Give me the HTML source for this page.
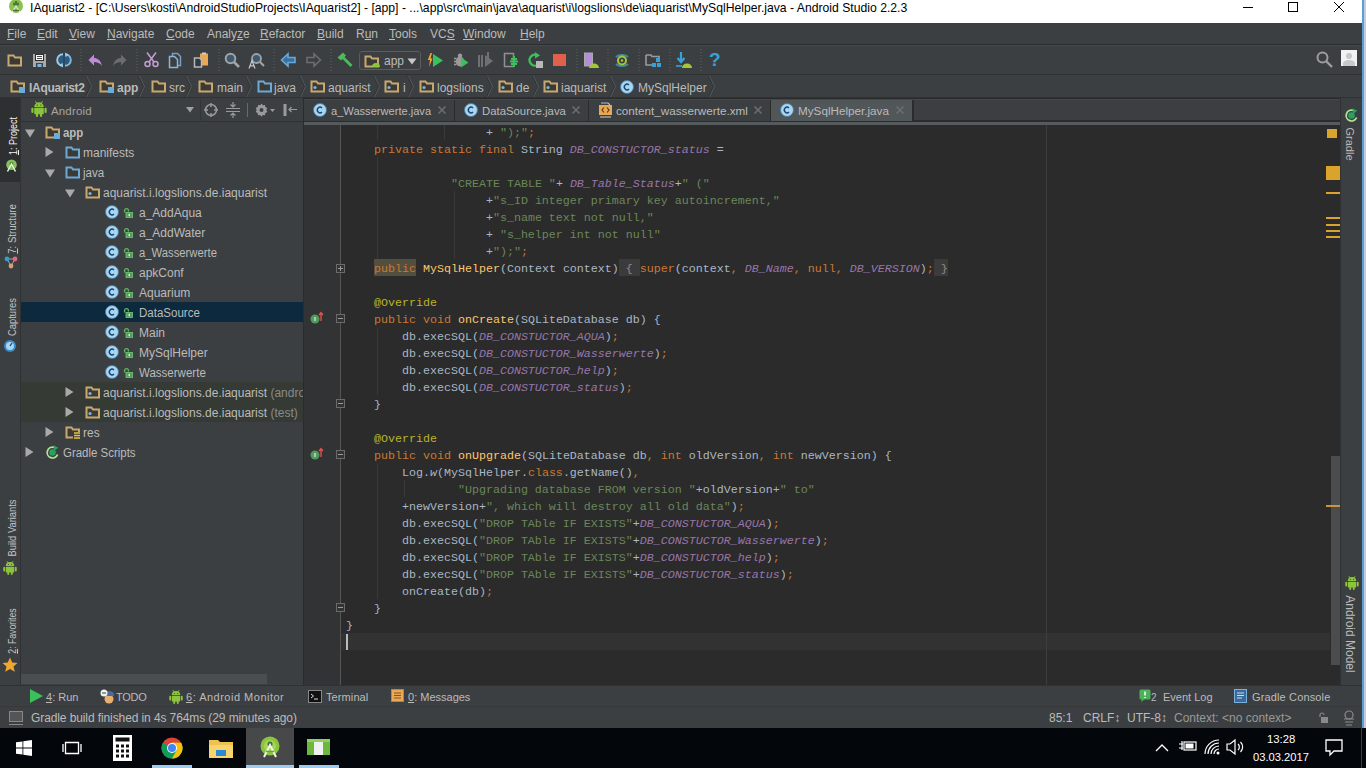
<!DOCTYPE html>
<html><head><meta charset="utf-8"><style>
*{box-sizing:border-box}
html,body{margin:0;padding:0}
body{width:1366px;height:768px;overflow:hidden;position:relative;background:#3c3f41;font-family:"Liberation Sans",sans-serif;color:#bbbbbb;font-size:12px}
.a{position:absolute}
svg.a{overflow:visible}
.t{position:absolute;white-space:pre;line-height:14px}
u{text-decoration:underline;text-underline-offset:1px;text-decoration-thickness:1px}
.ln{position:absolute;height:17px;line-height:17px;white-space:pre;font-family:"Liberation Mono",monospace;font-size:11.6667px;color:#a9b7c6}
.ck{color:#cc7832}
.cs{color:#6a8759}
.cf{color:#9876aa;font-style:italic}
.ca{color:#bbb529}
.cm{color:#ffc66d}
.ci{font-style:italic}
.chl{color:#cc7832}
.cfb{color:#8c8c8c}
</style></head><body>
<div class="a" style="left:0px;top:0px;width:1366px;height:23px;background:#ffffff;"></div>
<div class="a" style="left:0;top:0;width:30px;height:23px;overflow:hidden"><svg class="a" style="left:8px;top:-2px" width="16" height="16" viewBox="0 0 16 16"><circle cx="8" cy="8" r="7" fill="#8cc152"/><path d="M8 3v7M5 6h6" stroke="#4e7a34" stroke-width="2.4"/><path d="M4.5 14l3.5-6 3.5 6" stroke="#e8f0e0" stroke-width="1.2" fill="none"/><path d="M5 12.5h6" stroke="#4e6a44" stroke-width="1.4"/></svg></div>
<div class="t" style="left:30px;top:1px;color:#000;font-size:12.2px;">IAquarist2 - [C:\Users\kosti\AndroidStudioProjects\IAquarist2] - [app] - ...\app\src\main\java\aquarist\i\logslions\de\iaquarist\MySqlHelper.java - Android Studio 2.2.3</div>
<div class="a" style="left:1243px;top:7px;width:10px;height:1px;background:#000;"></div>
<div class="a" style="left:1288px;top:2px;width:10px;height:10px;background:transparent;border:1px solid #000"></div>
<svg class="a" style="left:1334px;top:2px" width="10" height="10" viewBox="0 0 10 10"><path d="M0 0l10 10M10 0l-10 10" stroke="#000" stroke-width="1"/></svg>
<div class="t" style="left:7px;top:27px;color:#bbbbbb;font-size:12px;"><u>F</u>ile</div>
<div class="t" style="left:37px;top:27px;color:#bbbbbb;font-size:12px;"><u>E</u>dit</div>
<div class="t" style="left:69px;top:27px;color:#bbbbbb;font-size:12px;"><u>V</u>iew</div>
<div class="t" style="left:107px;top:27px;color:#bbbbbb;font-size:12px;"><u>N</u>avigate</div>
<div class="t" style="left:166px;top:27px;color:#bbbbbb;font-size:12px;"><u>C</u>ode</div>
<div class="t" style="left:207px;top:27px;color:#bbbbbb;font-size:12px;">Analy<u>z</u>e</div>
<div class="t" style="left:260px;top:27px;color:#bbbbbb;font-size:12px;"><u>R</u>efactor</div>
<div class="t" style="left:317px;top:27px;color:#bbbbbb;font-size:12px;"><u>B</u>uild</div>
<div class="t" style="left:356px;top:27px;color:#bbbbbb;font-size:12px;">R<u>u</u>n</div>
<div class="t" style="left:389px;top:27px;color:#bbbbbb;font-size:12px;"><u>T</u>ools</div>
<div class="t" style="left:430px;top:27px;color:#bbbbbb;font-size:12px;">VC<u>S</u></div>
<div class="t" style="left:463px;top:27px;color:#bbbbbb;font-size:12px;"><u>W</u>indow</div>
<div class="t" style="left:520px;top:27px;color:#bbbbbb;font-size:12px;"><u>H</u>elp</div>
<div class="a" style="left:0px;top:44px;width:1362px;height:1px;background:#2a2c2e;"></div>
<div class="a" style="left:0px;top:45px;width:1362px;height:1px;background:#46494b;"></div>
<svg class="a" style="left:7px;top:54px" width="16" height="14" viewBox="0 0 16 14"><path d="M1.5 1.5h5l1.5 2h6v8h-12.5z" fill="#3b3a35" stroke="#c9a870" stroke-width="2"/></svg>
<svg class="a" style="left:33px;top:54px" width="13" height="13" viewBox="0 0 13 13"><rect x="0" y="0" width="13" height="13" fill="#a9a9a9"/><rect x="2.5" y="0.5" width="8" height="6" fill="#fafafa" stroke="#2e2e2e" stroke-width="1"/><path d="M4 2.5h5M4 4.5h5" stroke="#3a3a3a" stroke-width="0.9"/><rect x="3" y="9" width="7" height="4" fill="#2e4a63"/><rect x="4.5" y="10" width="4" height="3" fill="#8cb0d0"/></svg>
<svg class="a" style="left:56px;top:52px" width="16" height="16" viewBox="0 0 16 16"><circle cx="8" cy="8" r="5.5" fill="#2c5a80"/><path d="M7 2.2A5.8 5.8 0 0 0 7 13.8" stroke="#9ccce6" stroke-width="2" fill="none"/><path d="M9 2.2A5.8 5.8 0 0 1 9 13.8" stroke="#7fb8dc" stroke-width="2" fill="none"/><path d="M9 0.5l4 2.5-3.5 2z" fill="#9ccce6"/><path d="M7 15.5l-4-2.5 3.5-2z" fill="#9ccce6"/><path d="M8 2v12" stroke="#1e3a55" stroke-width="1"/></svg>
<svg class="a" style="left:80px;top:49px" width="2" height="22" viewBox="0 0 2 22"><path d="M1 0v22" stroke="#5e6163" stroke-width="1" stroke-dasharray="1 2"/></svg>
<svg class="a" style="left:88px;top:53px" width="15" height="15" viewBox="0 0 15 15"><path d="M14 13C13 7 9 5 6 5V1.5L0.5 7 6 12.5V9c3 0 6 1 8 4z" fill="#c08ad8"/></svg>
<svg class="a" style="left:112px;top:53px" width="15" height="15" viewBox="0 0 15 15"><path d="M1 13C2 7 6 5 9 5V1.5L14.5 7 9 12.5V9c-3 0-6 1-8 4z" fill="#6a6c6e"/></svg>
<svg class="a" style="left:136px;top:49px" width="2" height="22" viewBox="0 0 2 22"><path d="M1 0v22" stroke="#5e6163" stroke-width="1" stroke-dasharray="1 2"/></svg>
<svg class="a" style="left:144px;top:52px" width="15" height="16" viewBox="0 0 15 16"><g fill="none" stroke="#c59dd6" stroke-width="1.5"><circle cx="3.5" cy="12" r="2.5"/><circle cx="11.5" cy="12" r="2.5"/><path d="M5 10L12 0.5M10 10L3 0.5"/></g></svg>
<svg class="a" style="left:168px;top:52px" width="16" height="16" viewBox="0 0 16 16"><path d="M4.5 1.5h5l3 3v9h-8z" fill="none" stroke="#7a9fc0" stroke-width="1.5"/><path d="M1.5 4.5h5l3 3v8h-8z" fill="#3c3f41" stroke="#8cb4d8" stroke-width="1.5"/></svg>
<svg class="a" style="left:193px;top:52px" width="16" height="16" viewBox="0 0 16 16"><rect x="7" y="1.5" width="8" height="12" fill="#e8a855"/><path d="M9 0.5h4v2h-4z" fill="#d0d0d0"/><path d="M1.5 6h5l2 2v7h-7z" fill="#2e3a44" stroke="#b8b8b8" stroke-width="1.5"/></svg>
<svg class="a" style="left:218px;top:49px" width="2" height="22" viewBox="0 0 2 22"><path d="M1 0v22" stroke="#5e6163" stroke-width="1" stroke-dasharray="1 2"/></svg>
<svg class="a" style="left:224px;top:52px" width="16" height="16" viewBox="0 0 16 16"><circle cx="6.5" cy="6.5" r="4.8" fill="#3d5a73" stroke="#a0a4a8" stroke-width="2"/><path d="M10 10l5 5" stroke="#a0a4a8" stroke-width="2.6"/></svg>
<svg class="a" style="left:248px;top:52px" width="17" height="17" viewBox="0 0 17 17"><circle cx="8.5" cy="6.5" r="4.5" fill="#3d5a73" stroke="#a0a4a8" stroke-width="1.8"/><path d="M12 10l4 4" stroke="#a0a4a8" stroke-width="2.2"/><path d="M1 16.5l3-8 3 8M2 13.8h4" stroke="#c8c8c8" stroke-width="1.2" fill="none"/></svg>
<svg class="a" style="left:273px;top:49px" width="2" height="22" viewBox="0 0 2 22"><path d="M1 0v22" stroke="#5e6163" stroke-width="1" stroke-dasharray="1 2"/></svg>
<svg class="a" style="left:281px;top:53px" width="15" height="14" viewBox="0 0 15 14"><path d="M0.5 7L7 0.8V4.5h7v5H7v3.7z" fill="#3b6f9e" stroke="#66a8dc" stroke-width="1.6"/></svg>
<svg class="a" style="left:306px;top:53px" width="15" height="14" viewBox="0 0 15 14"><path d="M14.5 7L8 0.8V4.5H1v5h7v3.7z" fill="#3c3f41" stroke="#6b6d6f" stroke-width="1.6"/></svg>
<svg class="a" style="left:330px;top:49px" width="2" height="22" viewBox="0 0 2 22"><path d="M1 0v22" stroke="#5e6163" stroke-width="1" stroke-dasharray="1 2"/></svg>
<svg class="a" style="left:337px;top:52px" width="16" height="16" viewBox="0 0 16 16"><path d="M0.5 5.5L6 0.5l3 3-1.5 1.5 8 8-2 2-8-8-1.5 1.5z" fill="#4cbb5c"/></svg>
<div class="a" style="left:359px;top:51px;width:62px;height:19px;background:#3c3f41;border:1px solid #5a5d5f;border-radius:3px"></div>
<svg class="a" style="left:364px;top:55px" width="16" height="14" viewBox="0 0 16 14"><path d="M1.5 1.5h5l1.5 2h6v8h-12.5z" fill="#3b3a35" stroke="#c9a870" stroke-width="2"/></svg>
<svg class="a" style="left:371px;top:60px" width="10" height="8" viewBox="0 0 10 8"><path d="M1 7a4 4 0 0 1 8 0z" fill="#8cc43c"/></svg>
<div class="t" style="left:384px;top:54px;color:#bbbbbb;font-size:12px;">app</div>
<svg class="a" style="left:407px;top:58px" width="9" height="7" viewBox="0 0 9 7"><path d="M0.5 0.5h9l-4.5 6z" fill="#c8c8c8"/></svg>
<svg class="a" style="left:427px;top:52px" width="17" height="17" viewBox="0 0 17 17"><path d="M3.5 1L0.8 8h2.2l-1 7L5.5 6.5H3.5l1.5-5.5z" fill="#f0a732"/><path d="M6 2v13l10-6.5z" fill="#3bc15a"/></svg>
<svg class="a" style="left:453px;top:52px" width="16" height="17" viewBox="0 0 16 17"><ellipse cx="7" cy="9.5" rx="4.2" ry="5" fill="#9a9a9a"/><circle cx="7" cy="3.8" r="2.2" fill="#9a9a9a"/><path d="M1 6.5h2.5M1 9.5h2.5M1 12.5h2.5" stroke="#9a9a9a" stroke-width="1.3"/><path d="M8 5.5v10l7.5-5z" fill="#3bc15a"/></svg>
<svg class="a" style="left:478px;top:52px" width="16" height="17" viewBox="0 0 16 17"><path d="M1 3v12M4 3v12" stroke="#6e7072" stroke-width="2"/><path d="M7 3v12l8-6z" fill="#6e7072"/><path d="M10 0v6" stroke="#6e7072" stroke-width="2"/></svg>
<svg class="a" style="left:503px;top:52px" width="16" height="17" viewBox="0 0 16 17"><rect x="1.5" y="1.5" width="9" height="13" fill="none" stroke="#8e9092" stroke-width="1.5"/><path d="M11 4v11M7 9.5h8M8 7h6M8 12h6" stroke="#3bc15a" stroke-width="2"/></svg>
<svg class="a" style="left:528px;top:52px" width="16" height="17" viewBox="0 0 16 17"><path d="M10 3.5A5.5 5.5 0 1 0 11 12" fill="none" stroke="#3bc15a" stroke-width="2.4"/><path d="M7 0l5 3.5-5 3z" fill="#3bc15a"/><rect x="8" y="9" width="7" height="7" fill="#b8b8b8"/></svg>
<div class="a" style="left:553px;top:54px;width:13px;height:12px;background:#e0604e;"></div>
<svg class="a" style="left:576px;top:49px" width="2" height="22" viewBox="0 0 2 22"><path d="M1 0v22" stroke="#5e6163" stroke-width="1" stroke-dasharray="1 2"/></svg>
<svg class="a" style="left:583px;top:52px" width="16" height="17" viewBox="0 0 16 17"><rect x="1.5" y="1" width="8" height="13" fill="#b48ed8" stroke="#aaaaaa" stroke-width="1"/><path d="M6 16a5 4.5 0 0 1 10 0z" fill="#a4c639"/></svg>
<svg class="a" style="left:607px;top:49px" width="2" height="22" viewBox="0 0 2 22"><path d="M1 0v22" stroke="#5e6163" stroke-width="1" stroke-dasharray="1 2"/></svg>
<svg class="a" style="left:614px;top:52px" width="16" height="17" viewBox="0 0 16 17"><path d="M2 5a7 4 0 0 1 12 0" fill="none" stroke="#3b8aa8" stroke-width="2"/><path d="M2 12a7 4 0 0 0 12 0" fill="none" stroke="#3b8aa8" stroke-width="2"/><circle cx="8" cy="8.5" r="4" fill="none" stroke="#a4c639" stroke-width="2"/><circle cx="8" cy="8.5" r="1.3" fill="#a4c639"/></svg>
<svg class="a" style="left:638px;top:49px" width="2" height="22" viewBox="0 0 2 22"><path d="M1 0v22" stroke="#5e6163" stroke-width="1" stroke-dasharray="1 2"/></svg>
<svg class="a" style="left:645px;top:52px" width="17" height="17" viewBox="0 0 17 17"><path d="M1 3h5l1 1.5h7v3" fill="none" stroke="#9a9a9a" stroke-width="1.6"/><path d="M1 3v10h6" fill="none" stroke="#9a9a9a" stroke-width="1.6"/><rect x="11" y="6" width="4" height="4" fill="#3aa0d8"/><rect x="7" y="11" width="4" height="4" fill="#3aa0d8"/><rect x="12" y="11" width="4" height="4" fill="#3aa0d8"/></svg>
<svg class="a" style="left:669px;top:49px" width="2" height="22" viewBox="0 0 2 22"><path d="M1 0v22" stroke="#5e6163" stroke-width="1" stroke-dasharray="1 2"/></svg>
<svg class="a" style="left:675px;top:52px" width="17" height="17" viewBox="0 0 17 17"><path d="M6 0v9M2.5 6l3.5 4 3.5-4" stroke="#3aa0d8" stroke-width="2.2" fill="none"/><path d="M1 14h6" stroke="#3aa0d8" stroke-width="1.6"/><path d="M7 16a5 4.5 0 0 1 10 0z" fill="#a4c639"/></svg>
<svg class="a" style="left:700px;top:49px" width="2" height="22" viewBox="0 0 2 22"><path d="M1 0v22" stroke="#5e6163" stroke-width="1" stroke-dasharray="1 2"/></svg>
<div class="t" style="left:709px;top:50px;color:#3aa0d8;font-size:19px;font-weight:bold;line-height:20px">?</div>
<svg class="a" style="left:1316px;top:51px" width="17" height="17" viewBox="0 0 17 17"><circle cx="6.5" cy="6.5" r="5" fill="none" stroke="#9d9d9d" stroke-width="2"/><path d="M10 10l6 6" stroke="#9d9d9d" stroke-width="2.4"/></svg>
<svg class="a" style="left:1341px;top:50px" width="16" height="16" viewBox="0 0 16 16"><rect width="16" height="16" fill="#f2f2f2"/><circle cx="8" cy="6" r="3" fill="#c8c8c8"/><path d="M2 16v-3a6 3 0 0 1 12 0v3z" fill="#c8c8c8"/></svg>
<div class="a" style="left:0px;top:74px;width:1363px;height:1px;background:#2f3133;"></div>
<svg class="a" style="left:10px;top:80px" width="16" height="14" viewBox="0 0 16 14"><path d="M1.5 1.5h5l1.5 2h6v8h-12.5z" fill="#3b3a35" stroke="#c9a870" stroke-width="2"/><rect x="9" y="7" width="6" height="6" fill="#6cacd8"/></svg>
<div class="t" style="left:29px;top:81px;color:#bbbbbb;font-size:12px;font-weight:bold;letter-spacing:-0.3px">IAquarist2</div>
<svg class="a" style="left:85px;top:76px" width="7" height="21" viewBox="0 0 7 21"><path d="M0.5 0l5 10.5-5 10.5" fill="none" stroke="#2f3133" stroke-width="1"/><path d="M1.5 0l5 10.5-5 10.5" fill="none" stroke="#55585a" stroke-width="1"/></svg>
<svg class="a" style="left:99px;top:80px" width="16" height="14" viewBox="0 0 16 14"><path d="M1.5 1.5h5l1.5 2h6v8h-12.5z" fill="#3b3a35" stroke="#c9a870" stroke-width="2"/><rect x="9" y="7" width="6" height="6" fill="#6cacd8"/></svg>
<div class="t" style="left:117px;top:81px;color:#bbbbbb;font-size:12px;font-weight:bold">app</div>
<svg class="a" style="left:138px;top:76px" width="7" height="21" viewBox="0 0 7 21"><path d="M0.5 0l5 10.5-5 10.5" fill="none" stroke="#2f3133" stroke-width="1"/><path d="M1.5 0l5 10.5-5 10.5" fill="none" stroke="#55585a" stroke-width="1"/></svg>
<svg class="a" style="left:151px;top:80px" width="16" height="14" viewBox="0 0 16 14"><path d="M1.5 1.5h5l1.5 2h6v8h-12.5z" fill="#3b3a35" stroke="#c9a870" stroke-width="2"/></svg>
<div class="t" style="left:169px;top:81px;color:#bbbbbb;font-size:12px;">src</div>
<svg class="a" style="left:185px;top:76px" width="7" height="21" viewBox="0 0 7 21"><path d="M0.5 0l5 10.5-5 10.5" fill="none" stroke="#2f3133" stroke-width="1"/><path d="M1.5 0l5 10.5-5 10.5" fill="none" stroke="#55585a" stroke-width="1"/></svg>
<svg class="a" style="left:198px;top:80px" width="16" height="14" viewBox="0 0 16 14"><path d="M1.5 1.5h5l1.5 2h6v8h-12.5z" fill="#3b3a35" stroke="#c9a870" stroke-width="2"/></svg>
<div class="t" style="left:217px;top:81px;color:#bbbbbb;font-size:12px;">main</div>
<svg class="a" style="left:245px;top:76px" width="7" height="21" viewBox="0 0 7 21"><path d="M0.5 0l5 10.5-5 10.5" fill="none" stroke="#2f3133" stroke-width="1"/><path d="M1.5 0l5 10.5-5 10.5" fill="none" stroke="#55585a" stroke-width="1"/></svg>
<svg class="a" style="left:257px;top:80px" width="16" height="14" viewBox="0 0 16 14"><path d="M1.5 1.5h5l1.5 2h6v8h-12.5z" fill="#3b3a35" stroke="#6ca8d8" stroke-width="2"/></svg>
<div class="t" style="left:274px;top:81px;color:#bbbbbb;font-size:12px;">java</div>
<svg class="a" style="left:299px;top:76px" width="7" height="21" viewBox="0 0 7 21"><path d="M0.5 0l5 10.5-5 10.5" fill="none" stroke="#2f3133" stroke-width="1"/><path d="M1.5 0l5 10.5-5 10.5" fill="none" stroke="#55585a" stroke-width="1"/></svg>
<svg class="a" style="left:310px;top:80px" width="16" height="14" viewBox="0 0 16 14"><path d="M1.5 1.5h5l1.5 2h6v8h-12.5z" fill="#3b3a35" stroke="#c9a870" stroke-width="2"/><circle cx="5" cy="7.5" r="1.6" fill="#7fb4dc"/></svg>
<div class="t" style="left:328px;top:81px;color:#bbbbbb;font-size:12px;">aquarist</div>
<svg class="a" style="left:373px;top:76px" width="7" height="21" viewBox="0 0 7 21"><path d="M0.5 0l5 10.5-5 10.5" fill="none" stroke="#2f3133" stroke-width="1"/><path d="M1.5 0l5 10.5-5 10.5" fill="none" stroke="#55585a" stroke-width="1"/></svg>
<svg class="a" style="left:384px;top:80px" width="16" height="14" viewBox="0 0 16 14"><path d="M1.5 1.5h5l1.5 2h6v8h-12.5z" fill="#3b3a35" stroke="#c9a870" stroke-width="2"/><circle cx="5" cy="7.5" r="1.6" fill="#7fb4dc"/></svg>
<div class="t" style="left:403px;top:81px;color:#bbbbbb;font-size:12px;">i</div>
<svg class="a" style="left:407px;top:76px" width="7" height="21" viewBox="0 0 7 21"><path d="M0.5 0l5 10.5-5 10.5" fill="none" stroke="#2f3133" stroke-width="1"/><path d="M1.5 0l5 10.5-5 10.5" fill="none" stroke="#55585a" stroke-width="1"/></svg>
<svg class="a" style="left:419px;top:80px" width="16" height="14" viewBox="0 0 16 14"><path d="M1.5 1.5h5l1.5 2h6v8h-12.5z" fill="#3b3a35" stroke="#c9a870" stroke-width="2"/><circle cx="5" cy="7.5" r="1.6" fill="#7fb4dc"/></svg>
<div class="t" style="left:437px;top:81px;color:#bbbbbb;font-size:12px;">logslions</div>
<svg class="a" style="left:486px;top:76px" width="7" height="21" viewBox="0 0 7 21"><path d="M0.5 0l5 10.5-5 10.5" fill="none" stroke="#2f3133" stroke-width="1"/><path d="M1.5 0l5 10.5-5 10.5" fill="none" stroke="#55585a" stroke-width="1"/></svg>
<svg class="a" style="left:498px;top:80px" width="16" height="14" viewBox="0 0 16 14"><path d="M1.5 1.5h5l1.5 2h6v8h-12.5z" fill="#3b3a35" stroke="#c9a870" stroke-width="2"/><circle cx="5" cy="7.5" r="1.6" fill="#7fb4dc"/></svg>
<div class="t" style="left:516px;top:81px;color:#bbbbbb;font-size:12px;">de</div>
<svg class="a" style="left:532px;top:76px" width="7" height="21" viewBox="0 0 7 21"><path d="M0.5 0l5 10.5-5 10.5" fill="none" stroke="#2f3133" stroke-width="1"/><path d="M1.5 0l5 10.5-5 10.5" fill="none" stroke="#55585a" stroke-width="1"/></svg>
<svg class="a" style="left:543px;top:80px" width="16" height="14" viewBox="0 0 16 14"><path d="M1.5 1.5h5l1.5 2h6v8h-12.5z" fill="#3b3a35" stroke="#c9a870" stroke-width="2"/><circle cx="5" cy="7.5" r="1.6" fill="#7fb4dc"/></svg>
<div class="t" style="left:561px;top:81px;color:#bbbbbb;font-size:12px;">iaquarist</div>
<svg class="a" style="left:609px;top:76px" width="7" height="21" viewBox="0 0 7 21"><path d="M0.5 0l5 10.5-5 10.5" fill="none" stroke="#2f3133" stroke-width="1"/><path d="M1.5 0l5 10.5-5 10.5" fill="none" stroke="#55585a" stroke-width="1"/></svg>
<svg class="a" style="left:620px;top:80px" width="14" height="14" viewBox="0 0 14 14"><circle cx="7" cy="7" r="6.5" fill="#a6d6f2" stroke="#4a7aa0" stroke-width="0.9"/><path d="M9 4.9a2.8 2.8 0 1 0 0 4.2" fill="none" stroke="#1e4470" stroke-width="1.4"/></svg>
<div class="t" style="left:638px;top:81px;color:#bbbbbb;font-size:12px;">MySqlHelper</div>
<svg class="a" style="left:708px;top:76px" width="7" height="21" viewBox="0 0 7 21"><path d="M0.5 0l5 10.5-5 10.5" fill="none" stroke="#2f3133" stroke-width="1"/><path d="M1.5 0l5 10.5-5 10.5" fill="none" stroke="#55585a" stroke-width="1"/></svg>
<div class="a" style="left:0px;top:97px;width:1363px;height:1px;background:#2f3133;"></div>
<div class="a" style="left:0px;top:98px;width:20px;height:84px;background:#2d2f30;"></div>
<div class="t" style="left:-87.0px;top:128.5px;width:200px;text-align:center;transform:rotate(-90deg) scaleX(0.82);color:#f2f2f2;font-size:11px"><u>1</u>: Project</div>
<svg class="a" style="left:5px;top:159px" width="13" height="13" viewBox="0 0 13 13"><circle cx="6.5" cy="5.8" r="5.3" fill="#86bf5e"/><circle cx="6.5" cy="4.8" r="2" fill="#4f8a3a"/><path d="M2.5 12.5L6.5 5l4 7.5" stroke="#e6f5d8" stroke-width="1.5" fill="none"/></svg>
<div class="t" style="left:-88.0px;top:222.0px;width:200px;text-align:center;transform:rotate(-90deg) scaleX(0.87);color:#c4c4c4;font-size:11px"><u>7</u>: Structure</div>
<svg class="a" style="left:4px;top:255px" width="14" height="14" viewBox="0 0 14 14"><path d="M3 4L7 11l4-7z" fill="none" stroke="#a0a0a0" stroke-width="1"/><circle cx="3" cy="4" r="2.4" fill="#3a9cc4"/><circle cx="11" cy="4" r="2.4" fill="#e0687e"/><circle cx="7" cy="11" r="2.4" fill="#d4a078"/></svg>
<div class="t" style="left:-88.0px;top:310.0px;width:200px;text-align:center;transform:rotate(-90deg) scaleX(0.85);color:#c4c4c4;font-size:11px">Captures</div>
<svg class="a" style="left:3px;top:339px" width="14" height="14" viewBox="0 0 14 14"><circle cx="7" cy="7" r="6" fill="#3a8ac8"/><circle cx="7" cy="7" r="4" fill="#a8d4f0"/><path d="M7 7l2-3" stroke="#1e3a5a" stroke-width="1.2"/></svg>
<div class="t" style="left:-88.0px;top:521.0px;width:200px;text-align:center;transform:rotate(-90deg) scaleX(0.85);color:#c4c4c4;font-size:11px">Build Variants</div>
<svg class="a" style="left:3px;top:560px;width:14px;height:15px" width="15" height="16" viewBox="0 0 15 16"><g fill="#8cc43c"><path d="M3 6.5a4.5 4.3 0 0 1 9 0z"/><rect x="3" y="7.3" width="9" height="6" rx="0.8"/><rect x="0.3" y="7.3" width="2" height="5" rx="1"/><rect x="12.7" y="7.3" width="2" height="5" rx="1"/><rect x="4.6" y="12" width="2" height="4" rx="1"/><rect x="8.4" y="12" width="2" height="4" rx="1"/><path d="M4.2 1.2l1.4 2.2M10.8 1.2l-1.4 2.2" stroke="#8cc43c" stroke-width="0.9"/></g><circle cx="5.8" cy="4.8" r="0.6" fill="#3c3f41"/><circle cx="9.2" cy="4.8" r="0.6" fill="#3c3f41"/></svg>
<div class="t" style="left:-88.0px;top:623.5px;width:200px;text-align:center;transform:rotate(-90deg) scaleX(0.79);color:#c4c4c4;font-size:11px"><u>2</u>: Favorites</div>
<svg class="a" style="left:2px;top:657px" width="16" height="16" viewBox="0 0 16 16"><path d="M8 0.5l2.2 5 5.3 0.4-4 3.6 1.3 5.3L8 12 3.2 14.8l1.3-5.3-4-3.6 5.3-.4z" fill="#f0a732"/></svg>
<div class="a" style="left:20px;top:98px;width:1px;height:587px;background:#2f3133;"></div>
<svg class="a" style="left:31px;top:100px;width:16px;height:17px" width="15" height="16" viewBox="0 0 15 16"><g fill="#8cc43c"><path d="M3 6.5a4.5 4.3 0 0 1 9 0z"/><rect x="3" y="7.3" width="9" height="6" rx="0.8"/><rect x="0.3" y="7.3" width="2" height="5" rx="1"/><rect x="12.7" y="7.3" width="2" height="5" rx="1"/><rect x="4.6" y="12" width="2" height="4" rx="1"/><rect x="8.4" y="12" width="2" height="4" rx="1"/><path d="M4.2 1.2l1.4 2.2M10.8 1.2l-1.4 2.2" stroke="#8cc43c" stroke-width="0.9"/></g><circle cx="5.8" cy="4.8" r="0.6" fill="#3c3f41"/><circle cx="9.2" cy="4.8" r="0.6" fill="#3c3f41"/></svg>
<div class="t" style="left:51px;top:104px;color:#a4a4a4;font-size:11.5px;letter-spacing:0.15px">Android</div>
<svg class="a" style="left:186px;top:107px" width="8" height="6" viewBox="0 0 8 6"><path d="M0 0h8l-4 5.5z" fill="#a0a0a0"/></svg>
<div class="a" style="left:200px;top:99px;width:1px;height:22px;background:#323436;"></div>
<svg class="a" style="left:204px;top:103px" width="14" height="14" viewBox="0 0 14 14"><circle cx="7" cy="7" r="5.5" fill="none" stroke="#9a9a9a" stroke-width="1.5"/><path d="M7 0v4M7 10v4M0 7h4M10 7h4" stroke="#9a9a9a" stroke-width="1.5"/></svg>
<svg class="a" style="left:226px;top:102px" width="14" height="16" viewBox="0 0 14 16"><path d="M0 6.5h14M0 9.5h14" stroke="#9a9a9a" stroke-width="1"/><path d="M7 0v5M4.5 2.5L7 5l2.5-2.5M7 16v-5M4.5 13.5L7 11l2.5 2.5" stroke="#9a9a9a" stroke-width="1.2" fill="none"/></svg>
<div class="a" style="left:247px;top:103px;width:1px;height:14px;background:#6a6a6a;"></div>
<svg class="a" style="left:255px;top:103px" width="20" height="14" viewBox="0 0 20 14"><path d="M6.5 0.5l1.3 1.8 2.2-.4.3 2.2 2 1-1 2 1 2-2 1-.3 2.2-2.2-.4-1.3 1.8-1.3-1.8-2.2.4-.3-2.2-2-1 1-2-1-2 2-1 .3-2.2 2.2.4z" fill="#9a9a9a"/><circle cx="6.5" cy="7" r="2" fill="#3c3f41"/><path d="M15 6h5l-2.5 3z" fill="#9a9a9a"/></svg>
<svg class="a" style="left:283px;top:103px" width="14" height="14" viewBox="0 0 14 14"><rect x="0.5" y="1" width="3" height="12" fill="#9a9a9a"/><path d="M6 6.5h8M8.5 4L6 6.5 8.5 9" stroke="#9a9a9a" stroke-width="1.2" fill="none"/></svg>
<div class="a" style="left:21px;top:121px;width:282px;height:1px;background:#2f3133;"></div>
<svg class="a" style="left:25px;top:129px" width="10" height="9" viewBox="0 0 10 9"><path d="M0 0.5h10l-5 8z" fill="#a9a9a9"/></svg>
<svg class="a" style="left:45px;top:126px" width="16" height="14" viewBox="0 0 16 14"><path d="M1.5 1.5h5l1.5 2h6v8h-12.5z" fill="#3b3a35" stroke="#c9a870" stroke-width="2"/><rect x="9" y="7" width="6" height="6" fill="#6cacd8"/></svg>
<div class="t" style="left:63px;top:126px;color:#bbbbbb;font-size:12px;font-weight:bold;transform:scaleX(0.95);transform-origin:0 0">app</div>
<svg class="a" style="left:45px;top:147px" width="9" height="10" viewBox="0 0 9 10"><path d="M0.5 0v10l8-5z" fill="#a9a9a9"/></svg>
<svg class="a" style="left:65px;top:146px" width="16" height="14" viewBox="0 0 16 14"><path d="M1.5 1.5h5l1.5 2h6v8h-12.5z" fill="#3b3a35" stroke="#6ca8d8" stroke-width="2"/></svg>
<div class="t" style="left:83px;top:146px;color:#bbbbbb;font-size:12px;">manifests</div>
<svg class="a" style="left:45px;top:169px" width="10" height="9" viewBox="0 0 10 9"><path d="M0 0.5h10l-5 8z" fill="#a9a9a9"/></svg>
<svg class="a" style="left:65px;top:166px" width="16" height="14" viewBox="0 0 16 14"><path d="M1.5 1.5h5l1.5 2h6v8h-12.5z" fill="#3b3a35" stroke="#6ca8d8" stroke-width="2"/></svg>
<div class="t" style="left:83px;top:166px;color:#bbbbbb;font-size:12px;;transform:scaleX(0.96);transform-origin:0 0">java</div>
<svg class="a" style="left:65px;top:189px" width="10" height="9" viewBox="0 0 10 9"><path d="M0 0.5h10l-5 8z" fill="#a9a9a9"/></svg>
<svg class="a" style="left:85px;top:186px" width="16" height="14" viewBox="0 0 16 14"><path d="M1.5 1.5h5l1.5 2h6v8h-12.5z" fill="#3b3a35" stroke="#c9a870" stroke-width="2"/><circle cx="5" cy="7.5" r="1.6" fill="#7fb4dc"/></svg>
<div class="t" style="left:103px;top:186px;color:#bbbbbb;font-size:12px;">aquarist.i.logslions.de.iaquarist</div>
<svg class="a" style="left:105px;top:205px" width="14" height="14" viewBox="0 0 14 14"><circle cx="7" cy="7" r="6.5" fill="#a6d6f2" stroke="#4a7aa0" stroke-width="0.9"/><path d="M9 4.9a2.8 2.8 0 1 0 0 4.2" fill="none" stroke="#1e4470" stroke-width="1.4"/></svg>
<svg class="a" style="left:123px;top:208px" width="10" height="10" viewBox="0 0 10 10"><path d="M1.6 4.5v-2a1.9 1.9 0 0 1 3.8 0v1" fill="none" stroke="#62b565" stroke-width="1.3"/><rect x="3" y="4.5" width="6.5" height="5" fill="#4f9e58" stroke="#78c57a" stroke-width="0.8"/><rect x="5.6" y="5.8" width="1.3" height="2.4" fill="#e8f0e8"/></svg>
<div class="t" style="left:139px;top:206px;color:#bbbbbb;font-size:12px;">a_AddAqua</div>
<svg class="a" style="left:105px;top:225px" width="14" height="14" viewBox="0 0 14 14"><circle cx="7" cy="7" r="6.5" fill="#a6d6f2" stroke="#4a7aa0" stroke-width="0.9"/><path d="M9 4.9a2.8 2.8 0 1 0 0 4.2" fill="none" stroke="#1e4470" stroke-width="1.4"/></svg>
<svg class="a" style="left:123px;top:228px" width="10" height="10" viewBox="0 0 10 10"><path d="M1.6 4.5v-2a1.9 1.9 0 0 1 3.8 0v1" fill="none" stroke="#62b565" stroke-width="1.3"/><rect x="3" y="4.5" width="6.5" height="5" fill="#4f9e58" stroke="#78c57a" stroke-width="0.8"/><rect x="5.6" y="5.8" width="1.3" height="2.4" fill="#e8f0e8"/></svg>
<div class="t" style="left:139px;top:226px;color:#bbbbbb;font-size:12px;">a_AddWater</div>
<svg class="a" style="left:105px;top:245px" width="14" height="14" viewBox="0 0 14 14"><circle cx="7" cy="7" r="6.5" fill="#a6d6f2" stroke="#4a7aa0" stroke-width="0.9"/><path d="M9 4.9a2.8 2.8 0 1 0 0 4.2" fill="none" stroke="#1e4470" stroke-width="1.4"/></svg>
<svg class="a" style="left:123px;top:248px" width="10" height="10" viewBox="0 0 10 10"><path d="M1.6 4.5v-2a1.9 1.9 0 0 1 3.8 0v1" fill="none" stroke="#62b565" stroke-width="1.3"/><rect x="3" y="4.5" width="6.5" height="5" fill="#4f9e58" stroke="#78c57a" stroke-width="0.8"/><rect x="5.6" y="5.8" width="1.3" height="2.4" fill="#e8f0e8"/></svg>
<div class="t" style="left:139px;top:246px;color:#bbbbbb;font-size:12px;;transform:scaleX(0.94);transform-origin:0 0">a_Wasserwerte</div>
<svg class="a" style="left:105px;top:265px" width="14" height="14" viewBox="0 0 14 14"><circle cx="7" cy="7" r="6.5" fill="#a6d6f2" stroke="#4a7aa0" stroke-width="0.9"/><path d="M9 4.9a2.8 2.8 0 1 0 0 4.2" fill="none" stroke="#1e4470" stroke-width="1.4"/></svg>
<svg class="a" style="left:123px;top:268px" width="10" height="10" viewBox="0 0 10 10"><path d="M1.6 4.5v-2a1.9 1.9 0 0 1 3.8 0v1" fill="none" stroke="#62b565" stroke-width="1.3"/><rect x="3" y="4.5" width="6.5" height="5" fill="#4f9e58" stroke="#78c57a" stroke-width="0.8"/><rect x="5.6" y="5.8" width="1.3" height="2.4" fill="#e8f0e8"/></svg>
<div class="t" style="left:139px;top:266px;color:#bbbbbb;font-size:12px;">apkConf</div>
<svg class="a" style="left:105px;top:285px" width="14" height="14" viewBox="0 0 14 14"><circle cx="7" cy="7" r="6.5" fill="#a6d6f2" stroke="#4a7aa0" stroke-width="0.9"/><path d="M9 4.9a2.8 2.8 0 1 0 0 4.2" fill="none" stroke="#1e4470" stroke-width="1.4"/></svg>
<svg class="a" style="left:123px;top:288px" width="10" height="10" viewBox="0 0 10 10"><path d="M1.6 4.5v-2a1.9 1.9 0 0 1 3.8 0v1" fill="none" stroke="#62b565" stroke-width="1.3"/><rect x="3" y="4.5" width="6.5" height="5" fill="#4f9e58" stroke="#78c57a" stroke-width="0.8"/><rect x="5.6" y="5.8" width="1.3" height="2.4" fill="#e8f0e8"/></svg>
<div class="t" style="left:139px;top:286px;color:#bbbbbb;font-size:12px;">Aquarium</div>
<div class="a" style="left:21px;top:302px;width:282px;height:20px;background:#0d293e;"></div>
<svg class="a" style="left:105px;top:305px" width="14" height="14" viewBox="0 0 14 14"><circle cx="7" cy="7" r="6.5" fill="#a6d6f2" stroke="#4a7aa0" stroke-width="0.9"/><path d="M9 4.9a2.8 2.8 0 1 0 0 4.2" fill="none" stroke="#1e4470" stroke-width="1.4"/></svg>
<svg class="a" style="left:123px;top:308px" width="10" height="10" viewBox="0 0 10 10"><path d="M1.6 4.5v-2a1.9 1.9 0 0 1 3.8 0v1" fill="none" stroke="#62b565" stroke-width="1.3"/><rect x="3" y="4.5" width="6.5" height="5" fill="#4f9e58" stroke="#78c57a" stroke-width="0.8"/><rect x="5.6" y="5.8" width="1.3" height="2.4" fill="#e8f0e8"/></svg>
<div class="t" style="left:139px;top:306px;color:#bbbbbb;font-size:12px;;transform:scaleX(0.96);transform-origin:0 0">DataSource</div>
<svg class="a" style="left:105px;top:325px" width="14" height="14" viewBox="0 0 14 14"><circle cx="7" cy="7" r="6.5" fill="#a6d6f2" stroke="#4a7aa0" stroke-width="0.9"/><path d="M9 4.9a2.8 2.8 0 1 0 0 4.2" fill="none" stroke="#1e4470" stroke-width="1.4"/></svg>
<svg class="a" style="left:123px;top:328px" width="10" height="10" viewBox="0 0 10 10"><path d="M1.6 4.5v-2a1.9 1.9 0 0 1 3.8 0v1" fill="none" stroke="#62b565" stroke-width="1.3"/><rect x="3" y="4.5" width="6.5" height="5" fill="#4f9e58" stroke="#78c57a" stroke-width="0.8"/><rect x="5.6" y="5.8" width="1.3" height="2.4" fill="#e8f0e8"/></svg>
<div class="t" style="left:139px;top:326px;color:#bbbbbb;font-size:12px;">Main</div>
<svg class="a" style="left:105px;top:345px" width="14" height="14" viewBox="0 0 14 14"><circle cx="7" cy="7" r="6.5" fill="#a6d6f2" stroke="#4a7aa0" stroke-width="0.9"/><path d="M9 4.9a2.8 2.8 0 1 0 0 4.2" fill="none" stroke="#1e4470" stroke-width="1.4"/></svg>
<svg class="a" style="left:123px;top:348px" width="10" height="10" viewBox="0 0 10 10"><path d="M1.6 4.5v-2a1.9 1.9 0 0 1 3.8 0v1" fill="none" stroke="#62b565" stroke-width="1.3"/><rect x="3" y="4.5" width="6.5" height="5" fill="#4f9e58" stroke="#78c57a" stroke-width="0.8"/><rect x="5.6" y="5.8" width="1.3" height="2.4" fill="#e8f0e8"/></svg>
<div class="t" style="left:139px;top:346px;color:#bbbbbb;font-size:12px;">MySqlHelper</div>
<svg class="a" style="left:105px;top:365px" width="14" height="14" viewBox="0 0 14 14"><circle cx="7" cy="7" r="6.5" fill="#a6d6f2" stroke="#4a7aa0" stroke-width="0.9"/><path d="M9 4.9a2.8 2.8 0 1 0 0 4.2" fill="none" stroke="#1e4470" stroke-width="1.4"/></svg>
<svg class="a" style="left:123px;top:368px" width="10" height="10" viewBox="0 0 10 10"><path d="M1.6 4.5v-2a1.9 1.9 0 0 1 3.8 0v1" fill="none" stroke="#62b565" stroke-width="1.3"/><rect x="3" y="4.5" width="6.5" height="5" fill="#4f9e58" stroke="#78c57a" stroke-width="0.8"/><rect x="5.6" y="5.8" width="1.3" height="2.4" fill="#e8f0e8"/></svg>
<div class="t" style="left:139px;top:366px;color:#bbbbbb;font-size:12px;;transform:scaleX(0.96);transform-origin:0 0">Wasserwerte</div>
<div class="a" style="left:21px;top:382px;width:282px;height:20px;background:#353a35;"></div>
<svg class="a" style="left:65px;top:387px" width="9" height="10" viewBox="0 0 9 10"><path d="M0.5 0v10l8-5z" fill="#a9a9a9"/></svg>
<svg class="a" style="left:85px;top:386px" width="16" height="14" viewBox="0 0 16 14"><path d="M1.5 1.5h5l1.5 2h6v8h-12.5z" fill="#3b3a35" stroke="#c9a870" stroke-width="2"/><circle cx="5" cy="7.5" r="1.6" fill="#7fb4dc"/></svg>
<div class="t" style="left:103px;top:386px;color:#bbbbbb;font-size:12px;">aquarist.i.logslions.de.iaquarist <span style="color:#8a8a8a">(andro</span></div>
<div class="a" style="left:21px;top:402px;width:282px;height:20px;background:#353a35;"></div>
<svg class="a" style="left:65px;top:407px" width="9" height="10" viewBox="0 0 9 10"><path d="M0.5 0v10l8-5z" fill="#a9a9a9"/></svg>
<svg class="a" style="left:85px;top:406px" width="16" height="14" viewBox="0 0 16 14"><path d="M1.5 1.5h5l1.5 2h6v8h-12.5z" fill="#3b3a35" stroke="#c9a870" stroke-width="2"/><circle cx="5" cy="7.5" r="1.6" fill="#7fb4dc"/></svg>
<div class="t" style="left:103px;top:406px;color:#bbbbbb;font-size:12px;">aquarist.i.logslions.de.iaquarist <span style="color:#8a8a8a">(test)</span></div>
<svg class="a" style="left:45px;top:427px" width="9" height="10" viewBox="0 0 9 10"><path d="M0.5 0v10l8-5z" fill="#a9a9a9"/></svg>
<svg class="a" style="left:65px;top:426px" width="16" height="14" viewBox="0 0 16 14"><path d="M1.5 1.5h5l1.5 2h6v8h-12.5z" fill="#3b3a35" stroke="#c9a870" stroke-width="2"/><rect x="8" y="6" width="7" height="7" fill="#3b3a35"/><path d="M9 7h6M9 9.5h6M9 12h6" stroke="#e8c04a" stroke-width="1.6"/></svg>
<div class="t" style="left:83px;top:426px;color:#bbbbbb;font-size:12px;">res</div>
<svg class="a" style="left:25px;top:447px" width="9" height="10" viewBox="0 0 9 10"><path d="M0.5 0v10l8-5z" fill="#a9a9a9"/></svg>
<svg class="a" style="left:45px;top:445px" width="15" height="15" viewBox="0 0 15 15"><circle cx="7.5" cy="7.5" r="3.3" fill="#2aa160"/><path d="M12.6 9.5A5.4 5.4 0 1 1 9 2.3" stroke="#b4e294" stroke-width="1.8" fill="none"/><path d="M8.5 0.2l4.8 2.6-4 3z" fill="#2aa160"/></svg>
<div class="t" style="left:63px;top:446px;color:#bbbbbb;font-size:12px;;transform:scaleX(0.955);transform-origin:0 0">Gradle Scripts</div>
<div class="a" style="left:21px;top:673px;width:282px;height:12px;background:#3c3f41;"></div>
<div class="a" style="left:21px;top:674px;width:246px;height:10px;background:#4b4e50;"></div>
<div class="a" style="left:303px;top:98px;width:1px;height:587px;background:#2b2b2b;"></div>
<div class="a" style="left:304px;top:98px;width:1037px;height:23px;background:#3c3f41;"></div>
<div class="a" style="left:304px;top:98px;width:150px;height:23px;background:#3c3f41;"></div>
<div class="a" style="left:454px;top:98px;width:1px;height:23px;background:#2b2b2b;"></div>
<svg class="a" style="left:313px;top:103px" width="14" height="14" viewBox="0 0 14 14"><circle cx="7" cy="7" r="6.5" fill="#a6d6f2" stroke="#4a7aa0" stroke-width="0.9"/><path d="M9 4.9a2.8 2.8 0 1 0 0 4.2" fill="none" stroke="#1e4470" stroke-width="1.4"/></svg>
<div class="t" style="left:331px;top:104px;color:#bbbbbb;font-size:11.1px;">a_Wasserwerte.java</div>
<svg class="a" style="left:438px;top:106px" width="8" height="8" viewBox="0 0 8 8"><path d="M0.5 0.5l7 7M7.5 0.5l-7 7" stroke="#6b6d6f" stroke-width="1.6"/></svg>
<div class="a" style="left:455px;top:98px;width:133px;height:23px;background:#3c3f41;"></div>
<div class="a" style="left:588px;top:98px;width:1px;height:23px;background:#2b2b2b;"></div>
<svg class="a" style="left:464px;top:103px" width="14" height="14" viewBox="0 0 14 14"><circle cx="7" cy="7" r="6.5" fill="#a6d6f2" stroke="#4a7aa0" stroke-width="0.9"/><path d="M9 4.9a2.8 2.8 0 1 0 0 4.2" fill="none" stroke="#1e4470" stroke-width="1.4"/></svg>
<div class="t" style="left:482px;top:104px;color:#bbbbbb;font-size:11.35px;">DataSource.java</div>
<svg class="a" style="left:572px;top:106px" width="8" height="8" viewBox="0 0 8 8"><path d="M0.5 0.5l7 7M7.5 0.5l-7 7" stroke="#6b6d6f" stroke-width="1.6"/></svg>
<div class="a" style="left:589px;top:98px;width:181px;height:23px;background:#3c3f41;"></div>
<div class="a" style="left:770px;top:98px;width:1px;height:23px;background:#2b2b2b;"></div>
<svg class="a" style="left:598px;top:102px" width="15" height="16" viewBox="0 0 15 16"><rect x="1" y="3" width="13" height="10" fill="#e8a855"/><path d="M3 1h7l2 2" fill="none" stroke="#bbbbbb" stroke-width="1.2"/><path d="M6 5.5L4 8l2 2.5M9 5.5L11 8l-2 2.5" stroke="#5a3a10" stroke-width="1.2" fill="none"/><path d="M2 15h11" stroke="#bbbbbb" stroke-width="1.2"/></svg>
<div class="t" style="left:616px;top:104px;color:#bbbbbb;font-size:11.7px;">content_wasserwerte.xml</div>
<svg class="a" style="left:754px;top:106px" width="8" height="8" viewBox="0 0 8 8"><path d="M0.5 0.5l7 7M7.5 0.5l-7 7" stroke="#6b6d6f" stroke-width="1.6"/></svg>
<div class="a" style="left:771px;top:98px;width:141px;height:23px;background:#515658;"></div>
<div class="a" style="left:912px;top:98px;width:1px;height:23px;background:#2b2b2b;"></div>
<svg class="a" style="left:780px;top:103px" width="14" height="14" viewBox="0 0 14 14"><circle cx="7" cy="7" r="6.5" fill="#a6d6f2" stroke="#4a7aa0" stroke-width="0.9"/><path d="M9 4.9a2.8 2.8 0 1 0 0 4.2" fill="none" stroke="#1e4470" stroke-width="1.4"/></svg>
<div class="t" style="left:798px;top:104px;color:#bbbbbb;font-size:11.7px;">MySqlHelper.java</div>
<svg class="a" style="left:896px;top:106px" width="8" height="8" viewBox="0 0 8 8"><path d="M0.5 0.5l7 7M7.5 0.5l-7 7" stroke="#6b6d6f" stroke-width="1.6"/></svg>
<div class="a" style="left:913px;top:98px;width:428px;height:23px;background:#3c3f41;border-left:1px solid #2b2b2b;border-bottom:1px solid #2b2b2b"></div>
<div class="a" style="left:304px;top:98px;width:1037px;height:1px;background:#2b2b2b;"></div>
<div class="a" style="left:304px;top:99px;width:1037px;height:1px;background:#45484a;"></div>
<div class="a" style="left:304px;top:121px;width:1037px;height:1px;background:#2b2b2b;"></div>
<div class="a" style="left:304px;top:122px;width:1037px;height:3px;background:#555a5c;"></div>
<div class="a" style="left:304px;top:125px;width:37px;height:560px;background:#313335;"></div>
<div class="a" style="left:340px;top:125px;width:1px;height:560px;background:#555555;"></div>
<div class="a" style="left:341px;top:125px;width:999px;height:560px;background:#2b2b2b;"></div>
<div class="a" style="left:341px;top:633px;width:989px;height:17px;background:#323232;"></div>
<div class="a" style="left:374px;top:259px;width:42px;height:17px;background:#524f3f;"></div>
<div class="a" style="left:619px;top:259px;width:21px;height:17px;background:#3b3b3b;"></div>
<div class="a" style="left:934px;top:259px;width:14px;height:17px;background:#3b3b3b;"></div>
<div class="a" style="left:1046px;top:125px;width:1px;height:560px;background:#3d3d3d;"></div>
<div class="a" style="left:341px;top:125px;width:989px;height:560px;overflow:hidden">
<div class="ln" style="left:5px;top:0px">                    + <span class="cs">&quot;);&quot;</span><span class="ck">;</span></div>
<div class="ln" style="left:5px;top:17px">    <span class="ck">private static final </span>String <span class="cf">DB_CONSTUCTOR_status</span> =</div>
<div class="ln" style="left:5px;top:34px"></div>
<div class="ln" style="left:5px;top:51px">               <span class="cs">&quot;CREATE TABLE &quot;</span>+ <span class="cf">DB_Table_Status</span>+<span class="cs">&quot; (&quot;</span></div>
<div class="ln" style="left:5px;top:68px">                    +<span class="cs">&quot;s_ID integer primary key autoincrement,&quot;</span></div>
<div class="ln" style="left:5px;top:85px">                    +<span class="cs">&quot;s_name text not null,&quot;</span></div>
<div class="ln" style="left:5px;top:102px">                    + <span class="cs">&quot;s_helper int not null&quot;</span></div>
<div class="ln" style="left:5px;top:119px">                    +<span class="cs">&quot;);&quot;</span><span class="ck">;</span></div>
<div class="ln" style="left:5px;top:136px">    <span class="chl">public</span> <span class="cm">MySqlHelper</span>(Context context) <span class="cfb">{</span> <span class="ck">super</span>(context<span class="ck">, </span><span class="cf">DB_Name</span><span class="ck">, null, </span><span class="cf">DB_VERSION</span>)<span class="ck">;</span> <span class="cfb">}</span></div>
<div class="ln" style="left:5px;top:153px"></div>
<div class="ln" style="left:5px;top:170px"><span class="ca">    @Override</span></div>
<div class="ln" style="left:5px;top:187px">    <span class="ck">public void </span><span class="cm">onCreate</span>(SQLiteDatabase db) {</div>
<div class="ln" style="left:5px;top:204px">        db.execSQL(<span class="cf">DB_CONSTUCTOR_AQUA</span>)<span class="ck">;</span></div>
<div class="ln" style="left:5px;top:221px">        db.execSQL(<span class="cf">DB_CONSTUCTOR_Wasserwerte</span>)<span class="ck">;</span></div>
<div class="ln" style="left:5px;top:238px">        db.execSQL(<span class="cf">DB_CONSTUCTOR_help</span>)<span class="ck">;</span></div>
<div class="ln" style="left:5px;top:255px">        db.execSQL(<span class="cf">DB_CONSTUCTOR_status</span>)<span class="ck">;</span></div>
<div class="ln" style="left:5px;top:272px">    }</div>
<div class="ln" style="left:5px;top:289px"></div>
<div class="ln" style="left:5px;top:306px"><span class="ca">    @Override</span></div>
<div class="ln" style="left:5px;top:323px">    <span class="ck">public void </span><span class="cm">onUpgrade</span>(SQLiteDatabase db<span class="ck">, int </span>oldVersion<span class="ck">, int </span>newVersion) {</div>
<div class="ln" style="left:5px;top:340px">        Log.<span class="ci">w</span>(MySqlHelper.<span class="ck">class</span>.getName()<span class="ck">,</span></div>
<div class="ln" style="left:5px;top:357px">                <span class="cs">&quot;Upgrading database FROM version &quot;</span>+oldVersion+<span class="cs">&quot; to&quot;</span></div>
<div class="ln" style="left:5px;top:374px">        +newVersion+<span class="cs">&quot;, which will destroy all old data&quot;</span>)<span class="ck">;</span></div>
<div class="ln" style="left:5px;top:391px">        db.execSQL(<span class="cs">&quot;DROP TAble IF EXISTS&quot;</span>+<span class="cf">DB_CONSTUCTOR_AQUA</span>)<span class="ck">;</span></div>
<div class="ln" style="left:5px;top:408px">        db.execSQL(<span class="cs">&quot;DROP TAble IF EXISTS&quot;</span>+<span class="cf">DB_CONSTUCTOR_Wasserwerte</span>)<span class="ck">;</span></div>
<div class="ln" style="left:5px;top:425px">        db.execSQL(<span class="cs">&quot;DROP TAble IF EXISTS&quot;</span>+<span class="cf">DB_CONSTUCTOR_help</span>)<span class="ck">;</span></div>
<div class="ln" style="left:5px;top:442px">        db.execSQL(<span class="cs">&quot;DROP TAble IF EXISTS&quot;</span>+<span class="cf">DB_CONSTUCTOR_status</span>)<span class="ck">;</span></div>
<div class="ln" style="left:5px;top:459px">        onCreate(db)<span class="ck">;</span></div>
<div class="ln" style="left:5px;top:476px">    }</div>
<div class="ln" style="left:5px;top:493px">}</div>
<div class="ln" style="left:5px;top:510px"></div>
</div>
<div class="a" style="left:346px;top:634px;width:2px;height:16px;background:#bbbbbb;"></div>
<div class="a" style="left:377px;top:125px;width:1px;height:15px;background:#393939;"></div>
<div class="a" style="left:377px;top:157px;width:1px;height:102px;background:#393939;"></div>
<div class="a" style="left:444px;top:125px;width:1px;height:15px;background:#393939;"></div>
<div class="a" style="left:454px;top:191px;width:1px;height:68px;background:#393939;"></div>
<div class="a" style="left:377px;top:327px;width:1px;height:68px;background:#393939;"></div>
<div class="a" style="left:377px;top:463px;width:1px;height:136px;background:#393939;"></div>
<div class="a" style="left:404px;top:480px;width:1px;height:17px;background:#393939;"></div>
<svg class="a" style="left:310px;top:312px" width="14" height="12" viewBox="0 0 14 12"><circle cx="5" cy="7" r="4.5" fill="#4f9a5c"/><path d="M5 5v4" stroke="#e0e0e0" stroke-width="1.3"/><path d="M11 1v8M9 3l2-2.5 2 2.5" stroke="#e05050" stroke-width="1.4" fill="none"/></svg>
<svg class="a" style="left:310px;top:448px" width="14" height="12" viewBox="0 0 14 12"><circle cx="5" cy="7" r="4.5" fill="#4f9a5c"/><path d="M5 5v4" stroke="#e0e0e0" stroke-width="1.3"/><path d="M11 1v8M9 3l2-2.5 2 2.5" stroke="#e05050" stroke-width="1.4" fill="none"/></svg>
<svg class="a" style="left:336px;top:264px" width="9" height="9" viewBox="0 0 9 9"><rect x="0.5" y="0.5" width="8" height="8" fill="#313335" stroke="#6b6b6b"/><path d="M2 4.5h5M4.5 2v5" stroke="#9a9a9a"/></svg>
<svg class="a" style="left:336px;top:314px" width="9" height="9" viewBox="0 0 9 9"><rect x="0.5" y="0.5" width="8" height="8" fill="#313335" stroke="#6b6b6b"/><path d="M2 4.5h5" stroke="#9a9a9a"/></svg>
<svg class="a" style="left:336px;top:399px" width="9" height="9" viewBox="0 0 9 9"><rect x="0.5" y="0.5" width="8" height="8" fill="#313335" stroke="#6b6b6b"/><path d="M2 4.5h5" stroke="#9a9a9a"/></svg>
<svg class="a" style="left:336px;top:450px" width="9" height="9" viewBox="0 0 9 9"><rect x="0.5" y="0.5" width="8" height="8" fill="#313335" stroke="#6b6b6b"/><path d="M2 4.5h5" stroke="#9a9a9a"/></svg>
<svg class="a" style="left:336px;top:603px" width="9" height="9" viewBox="0 0 9 9"><rect x="0.5" y="0.5" width="8" height="8" fill="#313335" stroke="#6b6b6b"/><path d="M2 4.5h5" stroke="#9a9a9a"/></svg>
<div class="a" style="left:1327px;top:129px;width:10px;height:9px;background:#d9a32c;"></div>
<div class="a" style="left:1326px;top:166px;width:15px;height:14px;background:#d9a32c;"></div>
<div class="a" style="left:1326px;top:192px;width:14px;height:2px;background:#d9a32c;"></div>
<div class="a" style="left:1326px;top:217px;width:14px;height:2px;background:#d9a32c;"></div>
<div class="a" style="left:1326px;top:224px;width:14px;height:2px;background:#d9a32c;"></div>
<div class="a" style="left:1326px;top:230px;width:14px;height:2px;background:#d9a32c;"></div>
<div class="a" style="left:1326px;top:236px;width:14px;height:2px;background:#d9a32c;"></div>
<div class="a" style="left:1331px;top:456px;width:9px;height:209px;background:#4a4c4e;"></div>
<div class="a" style="left:1326px;top:505px;width:14px;height:2px;background:#c8963c;"></div>
<div class="a" style="left:1341px;top:98px;width:22px;height:587px;background:#3c3f41;"></div>
<div class="a" style="left:1340px;top:98px;width:1px;height:587px;background:#2f3133;"></div>
<svg class="a" style="left:1344px;top:108px" width="15" height="15" viewBox="0 0 15 15"><circle cx="7.5" cy="7.5" r="3.3" fill="#2aa160"/><path d="M12.6 9.5A5.4 5.4 0 1 1 9 2.3" stroke="#b4e294" stroke-width="1.8" fill="none"/><path d="M8.5 0.2l4.8 2.6-4 3z" fill="#2aa160"/></svg>
<div class="t" style="left:1250.0px;top:136.5px;width:200px;text-align:center;transform:rotate(90deg) scaleX(1.0);color:#bbbbbb;font-size:11px">Gradle</div>
<svg class="a" style="left:1345px;top:575px;width:14px;height:15px" width="15" height="16" viewBox="0 0 15 16"><g fill="#8cc43c"><path d="M3 6.5a4.5 4.3 0 0 1 9 0z"/><rect x="3" y="7.3" width="9" height="6" rx="0.8"/><rect x="0.3" y="7.3" width="2" height="5" rx="1"/><rect x="12.7" y="7.3" width="2" height="5" rx="1"/><rect x="4.6" y="12" width="2" height="4" rx="1"/><rect x="8.4" y="12" width="2" height="4" rx="1"/><path d="M4.2 1.2l1.4 2.2M10.8 1.2l-1.4 2.2" stroke="#8cc43c" stroke-width="0.9"/></g><circle cx="5.8" cy="4.8" r="0.6" fill="#3c3f41"/><circle cx="9.2" cy="4.8" r="0.6" fill="#3c3f41"/></svg>
<div class="t" style="left:1250.0px;top:627.0px;width:200px;text-align:center;transform:rotate(90deg) scaleX(1.0);color:#bbbbbb;font-size:12px">Android Model</div>
<div class="a" style="left:0px;top:685px;width:1363px;height:1px;background:#2f3133;"></div>
<svg class="a" style="left:29px;top:688px" width="16" height="16" viewBox="0 0 16 16"><path d="M1 1v14l13-7z" fill="#3bc15a"/></svg>
<div class="t" style="left:46px;top:690px;color:#bbbbbb;font-size:11px;"><u>4</u>: Run</div>
<svg class="a" style="left:100px;top:689px" width="16" height="16" viewBox="0 0 16 16"><circle cx="9" cy="10" r="4.5" fill="#e8b070"/><path d="M4 7h10v-2a5 3 0 0 0-10 0z" fill="#4a6a9a"/><circle cx="4" cy="4" r="3.5" fill="#f0f0f0"/><path d="M2 4h4" stroke="#444" stroke-width="1"/></svg>
<div class="t" style="left:116px;top:690px;color:#bbbbbb;font-size:11px;letter-spacing:-0.25px">TODO</div>
<svg class="a" style="left:169px;top:689px;width:14px;height:15px" width="15" height="16" viewBox="0 0 15 16"><g fill="#8cc43c"><path d="M3 6.5a4.5 4.3 0 0 1 9 0z"/><rect x="3" y="7.3" width="9" height="6" rx="0.8"/><rect x="0.3" y="7.3" width="2" height="5" rx="1"/><rect x="12.7" y="7.3" width="2" height="5" rx="1"/><rect x="4.6" y="12" width="2" height="4" rx="1"/><rect x="8.4" y="12" width="2" height="4" rx="1"/><path d="M4.2 1.2l1.4 2.2M10.8 1.2l-1.4 2.2" stroke="#8cc43c" stroke-width="0.9"/></g><circle cx="5.8" cy="4.8" r="0.6" fill="#3c3f41"/><circle cx="9.2" cy="4.8" r="0.6" fill="#3c3f41"/></svg>
<div class="t" style="left:186px;top:690px;color:#bbbbbb;font-size:11px;letter-spacing:0.5px"><u>6</u>: Android Monitor</div>
<svg class="a" style="left:308px;top:690px" width="14" height="13" viewBox="0 0 14 13"><rect x="0.5" y="0.5" width="13" height="12" fill="#111" stroke="#888"/><path d="M3 4l2.5 2L3 8M6 9h4" stroke="#ddd" stroke-width="1" fill="none"/></svg>
<div class="t" style="left:326px;top:690px;color:#bbbbbb;font-size:11px;letter-spacing:0.1px">Terminal</div>
<svg class="a" style="left:391px;top:689px" width="13" height="13" viewBox="0 0 13 13"><rect x="0.5" y="0.5" width="12" height="12" fill="#e8a855" stroke="#c88030"/><path d="M3 4h7M3 6.5h7M3 9h7" stroke="#8a5020" stroke-width="1"/></svg>
<div class="t" style="left:408px;top:690px;color:#bbbbbb;font-size:11px;"><u>0</u>: Messages</div>
<svg class="a" style="left:1139px;top:689px" width="16" height="14" viewBox="0 0 16 14"><rect x="0.5" y="0.5" width="11" height="10" rx="1.5" fill="#4fb05c"/><path d="M6 2.5v4M6 8v1" stroke="#fff" stroke-width="1.5"/><path d="M3 10l-1 3 4-3z" fill="#4fb05c"/></svg>
<div class="t" style="left:1151px;top:691px;color:#bbbbbb;font-size:10px;">2</div>
<div class="t" style="left:1163px;top:690px;color:#bbbbbb;font-size:11px;">Event Log</div>
<svg class="a" style="left:1234px;top:689px" width="13" height="14" viewBox="0 0 13 14"><rect x="0.5" y="0.5" width="12" height="13" fill="#3a6a9a" stroke="#7ab0dc"/><path d="M3 4h7M3 6.5h7M3 9h5" stroke="#cde" stroke-width="1"/></svg>
<div class="t" style="left:1252px;top:690px;color:#bbbbbb;font-size:11px;letter-spacing:0.14px">Gradle Console</div>
<div class="a" style="left:0px;top:706px;width:1363px;height:1px;background:#36383a;"></div>
<svg class="a" style="left:9px;top:711px" width="14" height="14" viewBox="0 0 14 14"><rect x="0.5" y="0.5" width="13" height="10" fill="#555" stroke="#888"/><path d="M0 13.5h14" stroke="#888"/></svg>
<div class="t" style="left:31px;top:711px;color:#bbbbbb;font-size:12px;letter-spacing:-0.1px">Gradle build finished in 4s 764ms (29 minutes ago)</div>
<div class="t" style="left:1049px;top:711px;color:#bbbbbb;font-size:12px;">85:1</div>
<div class="t" style="left:1083px;top:711px;color:#bbbbbb;font-size:12px;">CRLF↕</div>
<div class="t" style="left:1127px;top:711px;color:#bbbbbb;font-size:12px;">UTF-8↕</div>
<div class="t" style="left:1174px;top:711px;color:#999999;font-size:12px;">Context: &lt;no context&gt;</div>
<svg class="a" style="left:1318px;top:712px" width="12" height="12" viewBox="0 0 12 12"><path d="M2 5V3a2 2 0 0 1 4 0" fill="none" stroke="#8a8a8a" stroke-width="1.2"/><rect x="3" y="5" width="7" height="6" fill="#8a8a8a"/></svg>
<svg class="a" style="left:1342px;top:710px" width="14" height="16" viewBox="0 0 14 16"><circle cx="7" cy="5" r="4" fill="none" stroke="#8a8a8a" stroke-width="1.2"/><path d="M2 9h10M3 12h8M4 15h6" stroke="#8a8a8a" stroke-width="1.2"/></svg>
<div class="a" style="left:1362px;top:0px;width:2px;height:728px;background:#5b9fd4;"></div>
<div class="a" style="left:1364px;top:0px;width:2px;height:728px;background:#c4cbe0;"></div>
<div class="a" style="left:0px;top:728px;width:1366px;height:40px;background:#03060b;"></div>
<svg class="a" style="left:16px;top:740px" width="16" height="16" viewBox="0 0 16 16"><path d="M0 2.3l6.5-.9v6.2H0zM7.3 1.3L16 0v7.6H7.3zM0 8.4h6.5v6.2L0 13.7zM7.3 8.4H16V16l-8.7-1.2z" fill="#fff"/></svg>
<svg class="a" style="left:62px;top:739px" width="20" height="18" viewBox="0 0 20 18"><path d="M3.5 3.5h13v11h-13z" fill="none" stroke="#fff" stroke-width="1.3"/><path d="M1 5v8M19 5v8" stroke="#fff" stroke-width="1.3"/></svg>
<svg class="a" style="left:113px;top:735px" width="19" height="26" viewBox="0 0 19 26"><rect x="0" y="0" width="19" height="26" fill="#fff"/><rect x="2.5" y="2.5" width="14" height="4" fill="#111"/><g fill="#111"><rect x="3" y="9.5" width="3" height="3"/><rect x="8" y="9.5" width="3" height="3"/><rect x="13" y="9.5" width="3" height="3"/><rect x="3" y="14.5" width="3" height="3"/><rect x="8" y="14.5" width="3" height="3"/><rect x="13" y="14.5" width="3" height="3"/><rect x="3" y="19.5" width="3" height="3"/><rect x="8" y="19.5" width="3" height="3"/><rect x="13" y="19.5" width="3" height="3"/></g></svg>
<svg class="a" style="left:161px;top:737px" width="22" height="22" viewBox="0 0 22 22"><circle cx="11" cy="11" r="10.5" fill="#db4437"/><path d="M11 11L20.1 5.75A10.5 10.5 0 0 1 11 21.5z" fill="#0f9d58"/><path d="M11 11V21.5A10.5 10.5 0 0 1 1.9 5.75z" fill="#f4c20d" opacity="0"/><path d="M1.9 5.75A10.5 10.5 0 0 0 11 21.5L15.5 13.6z" fill="#0f9d58"/><path d="M20.1 5.75A10.5 10.5 0 0 1 11 21.5L15.5 13.6 11 5.5z" fill="#f4c20d"/><circle cx="11" cy="11" r="5" fill="#fff"/><circle cx="11" cy="11" r="4" fill="#4285f4"/></svg>
<svg class="a" style="left:208px;top:737px" width="26" height="22" viewBox="0 0 26 22"><path d="M1 3h9l2 2h13v16H1z" fill="#f0c050"/><rect x="1" y="8" width="24" height="13" fill="#f7d56a"/><rect x="8" y="13" width="10" height="6" fill="#2a8ad8"/></svg>
<div class="a" style="left:246px;top:728px;width:48px;height:37px;background:#47484a;"></div>
<div class="a" style="left:246px;top:765px;width:48px;height:3px;background:#9ccbee;"></div>
<svg class="a" style="left:259px;top:736px" width="22" height="22" viewBox="0 0 22 22"><circle cx="11" cy="10" r="9.5" fill="#8cc43c"/><circle cx="11" cy="10" r="6" fill="#a4d45a"/><circle cx="11" cy="8" r="2.5" fill="#3d6b3a"/><path d="M5 21L11 9l6 12" stroke="#f0f8e0" stroke-width="2" fill="none"/><path d="M7 15.5h8" stroke="#6aa040" stroke-width="1.5"/></svg>
<svg class="a" style="left:307px;top:739px" width="23" height="16" viewBox="0 0 23 16"><rect x="0" y="0" width="23" height="16" fill="#6cb83c"/><rect x="0" y="0" width="23" height="3" fill="#8cd060"/><rect x="7" y="3" width="9" height="13" fill="#f0f0f0"/></svg>
<div class="a" style="left:152px;top:765px;width:40px;height:3px;background:#9ccbee;"></div>
<div class="a" style="left:299px;top:765px;width:40px;height:3px;background:#9ccbee;"></div>
<svg class="a" style="left:1155px;top:743px" width="14" height="10" viewBox="0 0 14 10"><path d="M1 8l6-6 6 6" stroke="#fff" stroke-width="1.4" fill="none"/></svg>
<svg class="a" style="left:1179px;top:739px" width="18" height="14" viewBox="0 0 18 14"><rect x="5" y="3" width="12" height="8" fill="none" stroke="#fff" stroke-width="1.2"/><rect x="6.5" y="4.5" width="8" height="5" fill="#fff"/><path d="M0 5h4M0 9h4M3 2v9" stroke="#fff" stroke-width="1.2"/></svg>
<svg class="a" style="left:1204px;top:739px" width="18" height="16" viewBox="0 0 18 16"><path d="M1 15A14 14 0 0 1 15 1M4 15A11 11 0 0 1 15 4M7 15A8 8 0 0 1 15 7M10 15A5 5 0 0 1 15 10" stroke="#fff" stroke-width="1.2" fill="none"/><circle cx="14" cy="14" r="1.5" fill="#fff"/></svg>
<svg class="a" style="left:1226px;top:739px" width="20" height="16" viewBox="0 0 20 16"><path d="M1 5h3l5-4v14l-5-4H1z" fill="none" stroke="#fff" stroke-width="1.2"/><path d="M12 5a4 4 0 0 1 0 6M14.5 3a7 7 0 0 1 0 10" stroke="#fff" stroke-width="1.2" fill="none"/></svg>
<div class="t" style="left:1267px;top:732px;color:#ffffff;font-size:11.3px;">13:28</div>
<div class="t" style="left:1253px;top:750px;color:#ffffff;font-size:11.2px;">03.03.2017</div>
<div class="a" style="left:1361px;top:728px;width:1px;height:40px;background:#3a3d42;"></div>
<svg class="a" style="left:1325px;top:739px" width="18" height="17" viewBox="0 0 18 17"><path d="M1 1h16v11H9l-4 4v-4H1z" fill="none" stroke="#fff" stroke-width="1.3"/></svg>
</body></html>
